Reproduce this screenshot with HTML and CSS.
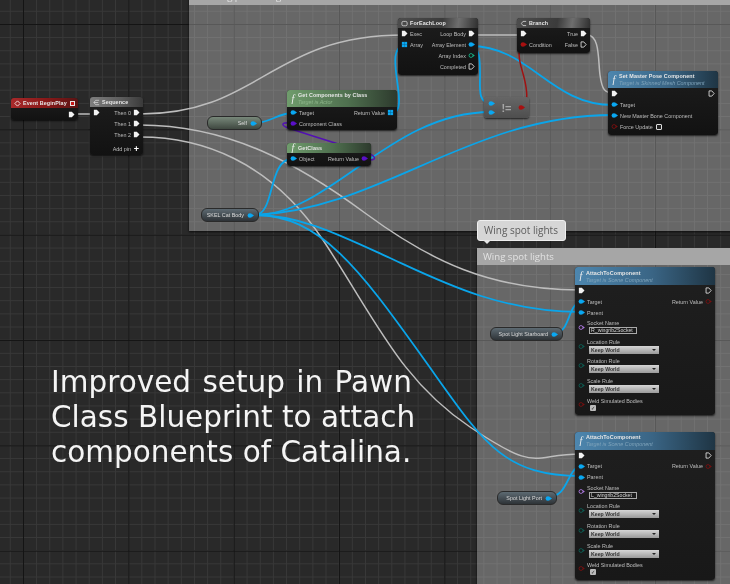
FILE: index.html
```html
<!doctype html>
<html lang="en">
<head>
    <meta charset="UTF-8">
    <meta name="viewport" content="width=device-width, initial-scale=1">
    <title>Pawn Class Blueprint</title>
    <link rel="stylesheet" href="styles.css">
</head>
<body>
<svg class="defs" width="0" height="0">
    <symbol id="exec" viewBox="0 0 8 8"><path d="M1 .8h3.4L7.4 4 4.4 7.2H1z" fill="currentColor"/></symbol>
    <symbol id="exec-off" viewBox="0 0 8 8"><path d="M1.2 1h3.1L7 4 4.3 7H1.2z" fill="none" stroke="currentColor" stroke-width=".9"/></symbol>
    <symbol id="data" viewBox="0 0 8 8"><circle cx="3.4" cy="4" r="2.7" fill="currentColor"/><path d="M5.6 2.2 8 4 5.6 5.8z" fill="currentColor"/></symbol>
    <symbol id="data-off" viewBox="0 0 8 8"><circle cx="3.4" cy="4" r="2.2" fill="none" stroke="currentColor" stroke-width="1"/><path d="M5.8 2.6 7.8 4 5.8 5.4z" fill="currentColor"/></symbol>
    <symbol id="array" viewBox="0 0 8 8"><path d="M1 1h6v6H1z" fill="currentColor"/><path d="M1 4h6M4 1v6" stroke="#0b5f88" stroke-width=".5"/></symbol>
</svg>

<div class="graph">
    <div class="comment comment-top"><div class="comment-title">Rotating planes together</div></div>
    <div class="comment comment-wing"><div class="comment-title">Wing spot lights</div></div>

    <svg class="wires" width="730" height="584" viewBox="0 0 730 584">
        <g class="wire-exec">
            <path d="M75 114H96"/>
            <path d="M140 114C260 114 270 35 404 35"/>
            <path d="M140 125C230 125 300 165 365 213S490 290 581 290"/>
            <path d="M140 137C200 137 270 160 323 240S400 380 470 427S530 454 581 454"/>
            <path d="M472 35H523"/>
            <path d="M587 35C600 35 598 60 600 75S605 93 613 93"/>
        </g>
        <g class="wire-data">
            <path d="M255 123C270 123 278 113 293 113"/>
            <path d="M255 215C275 215 268 159 292 159"/>
            <path d="M255 215C330 215 390 112 491 112"/>
            <path d="M255 215C380 210 470 115 613 115"/>
            <path d="M255 215C300 215 340 235 390 258S500 312 581 312"/>
            <path d="M255 215C320 215 360 270 421 355S500 476 581 476"/>
            <path d="M392 113C402 113 399 95 397 80S392 46 405 46"/>
            <path d="M470 46C480 46 480 60 480 75S478 103 491 103"/>
            <path d="M470 46C530 46 550 105 613 105"/>
            <path d="M554 333C572 333 566 302 583 302"/>
            <path d="M548 497C570 497 566 466 583 466"/>
        </g>
        <path class="wire-class" d="M362 159C378 162 378 157 366 152C340 145 310 135 288 128C280 125 281 122 293 123"/>
        <path class="wire-bool" d="M523 47C517 47 519 60 522 70S532 107 520 107"/>
    </svg>

    <div class="node node-event">
        <div class="node-head head-red">
            <svg class="head-icon" viewBox="0 0 8 8"><path d="M4 1 7 4 4 7 1 4z" fill="none" stroke="#fff" stroke-width=".9"/></svg>
            <span class="title">Event BeginPlay</span>
            <span class="delegate"></span>
        </div>
        <div class="row"><span></span><span class="pins"><svg class="pin white"><use href="#exec"/></svg></span></div>
    </div>

    <div class="node node-sequence">
        <div class="node-head head-grey">
            <svg class="head-icon" viewBox="0 0 8 8"><path d="M7 1.5H3L1 4l2 2.5h4M1 4h5" fill="none" stroke="#ddd" stroke-width=".8"/></svg>
            <span class="title">Sequence</span>
        </div>
        <div class="row">
            <span class="pins"><svg class="pin white"><use href="#exec"/></svg></span>
            <span class="pins">Then 0 <svg class="pin white"><use href="#exec"/></svg></span>
        </div>
        <div class="row"><span></span><span class="pins">Then 1 <svg class="pin white"><use href="#exec"/></svg></span></div>
        <div class="row"><span></span><span class="pins">Then 2 <svg class="pin white"><use href="#exec"/></svg></span></div>
        <div class="row row-add"><span></span><span class="pins">Add pin <b class="plus">+</b></span></div>
    </div>

    <div class="var var-self">Self <svg class="pin blue"><use href="#data"/></svg></div>
    <div class="var var-body">SKEL Cat Body <svg class="pin blue"><use href="#data"/></svg></div>

    <div class="node node-components">
        <div class="node-head head-green head-tall">
            <i class="fn">f</i>
            <div><div class="title">Get Components by Class</div><div class="subtitle subtitle-green">Target is Actor</div></div>
        </div>
        <div class="row">
            <span class="pins"><svg class="pin blue"><use href="#data"/></svg> Target</span>
            <span class="pins">Return Value <svg class="pin blue"><use href="#array"/></svg></span>
        </div>
        <div class="row"><span class="pins"><svg class="pin purple"><use href="#data"/></svg> Component Class</span></div>
    </div>

    <div class="node node-getclass">
        <div class="node-head head-green">
            <i class="fn">f</i>
            <span class="title">GetClass</span>
        </div>
        <div class="row">
            <span class="pins"><svg class="pin blue"><use href="#data"/></svg> Object</span>
            <span class="pins">Return Value <svg class="pin purple"><use href="#data"/></svg></span>
        </div>
    </div>

    <div class="node node-loop">
        <div class="node-head head-flow">
            <svg class="head-icon" viewBox="0 0 8 8"><rect x="1" y="1.6" width="6" height="5" rx="1.6" fill="none" stroke="#ddd" stroke-width=".9"/></svg>
            <span class="title">ForEachLoop</span>
        </div>
        <div class="row">
            <span class="pins"><svg class="pin white"><use href="#exec"/></svg> Exec</span>
            <span class="pins">Loop Body <svg class="pin white"><use href="#exec"/></svg></span>
        </div>
        <div class="row">
            <span class="pins"><svg class="pin blue"><use href="#array"/></svg> Array</span>
            <span class="pins">Array Element <svg class="pin blue"><use href="#data"/></svg></span>
        </div>
        <div class="row"><span></span><span class="pins">Array Index <svg class="pin teal"><use href="#data-off"/></svg></span></div>
        <div class="row"><span></span><span class="pins">Completed <svg class="pin white"><use href="#exec-off"/></svg></span></div>
    </div>

    <div class="node node-branch">
        <div class="node-head head-flow">
            <svg class="head-icon" viewBox="0 0 8 8"><path d="M7 1.6H3.4L1.6 4l1.8 2.4H7" fill="none" stroke="#ddd" stroke-width=".9"/></svg>
            <span class="title">Branch</span>
        </div>
        <div class="row">
            <span class="pins"><svg class="pin white"><use href="#exec"/></svg></span>
            <span class="pins">True <svg class="pin white"><use href="#exec"/></svg></span>
        </div>
        <div class="row">
            <span class="pins"><svg class="pin red"><use href="#data"/></svg> Condition</span>
            <span class="pins">False <svg class="pin white"><use href="#exec-off"/></svg></span>
        </div>
    </div>

    <div class="node-compare">
        <div class="compare-inputs">
            <svg class="pin blue"><use href="#data"/></svg>
            <svg class="pin blue"><use href="#data"/></svg>
        </div>
        <span class="compare-sign">!=</span>
        <svg class="pin red"><use href="#data"/></svg>
    </div>

    <div class="node node-master">
        <div class="node-head head-blue head-tall">
            <i class="fn">f</i>
            <div><div class="title">Set Master Pose Component</div><div class="subtitle">Target is Skinned Mesh Component</div></div>
        </div>
        <div class="row">
            <span class="pins"><svg class="pin white"><use href="#exec"/></svg></span>
            <span class="pins"><svg class="pin white"><use href="#exec-off"/></svg></span>
        </div>
        <div class="row"><span class="pins"><svg class="pin blue"><use href="#data"/></svg> Target</span></div>
        <div class="row"><span class="pins"><svg class="pin blue"><use href="#data"/></svg> New Master Bone Component</span></div>
        <div class="row"><span class="pins"><svg class="pin maroon"><use href="#data-off"/></svg> Force Update <span class="check check-off"></span></span></div>
    </div>

    <div class="var var-starboard">Spot Light Starboard <svg class="pin blue"><use href="#data"/></svg></div>
    <div class="var var-port">Spot Light Port <svg class="pin blue"><use href="#data"/></svg></div>

    <div class="node node-attach node-attach-r">
        <div class="node-head head-blue head-tall">
            <i class="fn">f</i>
            <div><div class="title">AttachToComponent</div><div class="subtitle">Target is Scene Component</div></div>
        </div>
        <div class="row">
            <span class="pins"><svg class="pin white"><use href="#exec"/></svg></span>
            <span class="pins"><svg class="pin white"><use href="#exec-off"/></svg></span>
        </div>
        <div class="row">
            <span class="pins"><svg class="pin blue"><use href="#data"/></svg> Target</span>
            <span class="pins">Return Value <svg class="pin maroon"><use href="#data-off"/></svg></span>
        </div>
        <div class="row"><span class="pins"><svg class="pin blue"><use href="#data"/></svg> Parent</span></div>
        <div class="param param-socket">
            <svg class="pin lilac"><use href="#data-off"/></svg>
            <div><div class="param-label">Socket Name</div><div class="text-field">R_wingrib2Socket</div></div>
        </div>
        <div class="param">
            <svg class="pin dark-teal"><use href="#data-off"/></svg>
            <div><div class="param-label">Location Rule</div><div class="dropdown">Keep World</div></div>
        </div>
        <div class="param">
            <svg class="pin dark-teal"><use href="#data-off"/></svg>
            <div><div class="param-label">Rotation Rule</div><div class="dropdown">Keep World</div></div>
        </div>
        <div class="param">
            <svg class="pin dark-teal"><use href="#data-off"/></svg>
            <div><div class="param-label">Scale Rule</div><div class="dropdown">Keep World</div></div>
        </div>
        <div class="param">
            <svg class="pin maroon"><use href="#data-off"/></svg>
            <div><div class="param-label">Weld Simulated Bodies</div><span class="check">&#10003;</span></div>
        </div>
    </div>

    <div class="node node-attach node-attach-l">
        <div class="node-head head-blue head-tall">
            <i class="fn">f</i>
            <div><div class="title">AttachToComponent</div><div class="subtitle">Target is Scene Component</div></div>
        </div>
        <div class="row">
            <span class="pins"><svg class="pin white"><use href="#exec"/></svg></span>
            <span class="pins"><svg class="pin white"><use href="#exec-off"/></svg></span>
        </div>
        <div class="row">
            <span class="pins"><svg class="pin blue"><use href="#data"/></svg> Target</span>
            <span class="pins">Return Value <svg class="pin maroon"><use href="#data-off"/></svg></span>
        </div>
        <div class="row"><span class="pins"><svg class="pin blue"><use href="#data"/></svg> Parent</span></div>
        <div class="param param-socket">
            <svg class="pin lilac"><use href="#data-off"/></svg>
            <div><div class="param-label">Socket Name</div><div class="text-field">L_wingrib2Socket</div></div>
        </div>
        <div class="param">
            <svg class="pin dark-teal"><use href="#data-off"/></svg>
            <div><div class="param-label">Location Rule</div><div class="dropdown">Keep World</div></div>
        </div>
        <div class="param">
            <svg class="pin dark-teal"><use href="#data-off"/></svg>
            <div><div class="param-label">Rotation Rule</div><div class="dropdown">Keep World</div></div>
        </div>
        <div class="param">
            <svg class="pin dark-teal"><use href="#data-off"/></svg>
            <div><div class="param-label">Scale Rule</div><div class="dropdown">Keep World</div></div>
        </div>
        <div class="param">
            <svg class="pin maroon"><use href="#data-off"/></svg>
            <div><div class="param-label">Weld Simulated Bodies</div><span class="check">&#10003;</span></div>
        </div>
    </div>

    <div class="tooltip">Wing spot lights</div>

    <p class="caption"><span class="caption-lead">Improved setup in Pawn</span><br>Class Blueprint to attach<br>components of Catalina.</p>
</div>
</body>
</html>
```
FILE: styles.css
```css
body {
    margin: 0;
    padding: 0;
    font-family: "Liberation Sans", Arial, sans-serif;
    overflow: hidden;
}

.defs {
    position: absolute;
}

/* blueprint grid: major lines every 105.33px, minor every 13.17px */
.graph {
    position: relative;
    width: 730px;
    height: 584px;
    overflow: hidden;
    background-color: #292929;
    background-image:
        linear-gradient(90deg, #141414 1px, transparent 1px),
        linear-gradient(#141414 1px, transparent 1px),
        linear-gradient(90deg, #383838 1px, transparent 1px),
        linear-gradient(#383838 1px, transparent 1px);
    background-size: 105.33px 105.33px, 105.33px 105.33px, 13.17px 13.17px, 13.17px 13.17px;
    background-position: 23px 24px, 23px 24px, 9.8px 10.8px, 9.8px 10.8px;
    filter: blur(0.35px);
}

.comment {
    position: absolute;
    background: rgba(255, 255, 255, 0.29);
    box-shadow: 0 1px 2px #0c0c0c;
}

.comment-top {
    left: 189px;
    top: -12px;
    width: 560px;
    height: 243px;
}

.comment-wing {
    left: 477px;
    top: 248px;
    width: 280px;
    height: 350px;
}

.comment-title {
    height: 17px;
    padding-left: 6px;
    line-height: 17px;
    font-family: "Open Sans", sans-serif;
    font-size: 9.6px;
    color: #e2e2e2;
    background: #a6a6a6;
}

.wires {
    position: absolute;
    left: 0;
    top: 0;
}

.wires path {
    fill: none;
}

.wire-exec {
    stroke: #bdbdbd;
    stroke-width: 1.5;
}

.wire-data {
    stroke: #0aa5ea;
    stroke-width: 1.8;
}

.wire-class {
    stroke: #5310b4;
    stroke-width: 1.4;
}

.wire-bool {
    stroke: #a01212;
    stroke-width: 1.5;
}

/* nodes */
.node {
    position: absolute;
    box-sizing: border-box;
    display: flex;
    flex-direction: column;
    background: linear-gradient(#1d1d1d, #121212);
    border-radius: 3px;
    box-shadow: 0 1px 2px rgba(0, 0, 0, 0.7);
    font-size: 5.4px;
    color: #bdbdbd;
}

.node-head {
    display: flex;
    align-items: center;
    gap: 2px;
    height: 10px;
    flex: none;
    padding: 0 3px;
    border-radius: 3px 3px 0 0;
    color: #e6e6e6;
}

.head-tall {
    height: 17px;
}

.head-red {
    background: linear-gradient(90deg, #a8292a, #861818 55%, #5a1414);
}

.head-grey {
    background: linear-gradient(90deg, #7d7d7d, #5c5c5c 60%, #3a3a3a);
}

.head-flow {
    background: linear-gradient(100deg, #4d4d4d, #3b3b3b 55%, #6e6e6e 75%, #2f2f2f);
}

.head-green {
    background: linear-gradient(90deg, #6f9c6c, #4f704f 55%, #2d3a2d);
}

.head-blue {
    background: linear-gradient(90deg, #4d86ae, #3a6585 55%, #1f3544);
}

.head-icon {
    width: 7px;
    height: 7px;
    flex: none;
}

.fn {
    font-family: "Liberation Serif", serif;
    font-size: 10px;
    line-height: 10px;
    color: #eee;
    width: 6px;
    text-align: center;
}

.title {
    font-weight: bold;
    font-size: 5.4px;
    letter-spacing: 0.1px;
    line-height: 7px;
    white-space: nowrap;
}

.subtitle {
    font-size: 5.4px;
    line-height: 6px;
    font-style: italic;
    color: #7fa3ba;
    white-space: nowrap;
}

.subtitle-green {
    color: #8fb78c;
}

.delegate {
    margin-left: auto;
    width: 3px;
    height: 3px;
    border: 0.7px solid #e4e4e4;
    background: #c81616;
}

.row {
    display: flex;
    justify-content: space-between;
    align-items: center;
    height: 11px;
    flex: none;
    padding: 0 3px;
}

.row-add {
    margin-top: 3.5px;
}

.pins {
    display: flex;
    align-items: center;
    gap: 2px;
    white-space: nowrap;
}

.pin {
    width: 7px;
    height: 7px;
    flex: none;
}

.white { color: #f2f2f2; }
.blue { color: #0aa8f2; }
.purple { color: #5a10c8; }
.teal { color: #14b88a; }
.red { color: #a81010; }
.maroon { color: #7a0f0f; }
.lilac { color: #b27be6; }
.dark-teal { color: #0c5f55; }

.plus {
    width: 7px;
    font-size: 9px;
    line-height: 7px;
    text-align: center;
    color: #fff;
}

.node-event {
    left: 11px;
    top: 98px;
    width: 67px;
    height: 22px;
}

.node-event .row {
    height: 12px;
}

.node-sequence {
    left: 90px;
    top: 97px;
    width: 53px;
    height: 58px;
}

.node-components {
    left: 287px;
    top: 90px;
    width: 110px;
    height: 40px;
}

.node-getclass {
    left: 287px;
    top: 143px;
    width: 84px;
    height: 23px;
}

.node-loop {
    left: 398px;
    top: 18px;
    width: 80px;
    height: 57px;
}

.node-branch {
    left: 517px;
    top: 18px;
    width: 73px;
    height: 35px;
}

.node-master {
    left: 608px;
    top: 71px;
    width: 110px;
    height: 64px;
}

.node-attach {
    width: 140px;
    height: 148px;
    background: linear-gradient(#1f1f1f, #181818);
}

.node-attach .head-tall {
    height: 18px;
}

.node-attach-r {
    left: 575px;
    top: 267px;
}

.node-attach-l {
    left: 575px;
    top: 431.6px;
}

.param {
    display: flex;
    align-items: center;
    gap: 2px;
    padding: 0 3px;
    margin-top: 4.7px;
}

.param-socket {
    margin-top: 2px;
}

.param-label {
    height: 7px;
    line-height: 7px;
}

.text-field {
    box-sizing: border-box;
    width: 48px;
    height: 7px;
    margin-left: 2px;
    padding-left: 1px;
    border: 0.6px solid #aaa;
    line-height: 5.6px;
    font-size: 5.2px;
    background: #1a1a1a;
    color: #d6d6d6;
}

.dropdown {
    position: relative;
    box-sizing: border-box;
    width: 70px;
    height: 8px;
    margin-left: 2px;
    padding-left: 2px;
    line-height: 8px;
    font-size: 5.2px;
    font-weight: bold;
    background: linear-gradient(#d6d6d6, #9a9a9a);
    color: #333;
}

.dropdown::after {
    content: "";
    position: absolute;
    right: 3px;
    top: 3px;
    border: 2px solid transparent;
    border-top-color: #222;
    border-bottom: 0;
}

.check {
    display: inline-block;
    box-sizing: border-box;
    width: 6px;
    height: 6px;
    margin-left: 3px;
    border-radius: 1px;
    line-height: 6px;
    font-size: 5px;
    text-align: center;
    background: #bbb;
    color: #222;
}

.check-off {
    background: #222;
    border: 1px solid #ddd;
    margin-left: 1px;
}

/* != compare node */
.node-compare {
    position: absolute;
    left: 484px;
    top: 97px;
    width: 45px;
    height: 21px;
    box-sizing: border-box;
    padding: 0 4px;
    display: flex;
    align-items: center;
    justify-content: space-between;
    border-radius: 3px;
    background: linear-gradient(#666, #4e4e4e);
    box-shadow: 0 1px 2px rgba(0, 0, 0, 0.7);
}

.compare-inputs {
    display: flex;
    flex-direction: column;
    gap: 2px;
}

.compare-sign {
    font-size: 11px;
    font-weight: bold;
    color: #a6a6a6;
}

/* variable getters */
.var {
    position: absolute;
    box-sizing: border-box;
    height: 14px;
    padding: 0 4px;
    display: flex;
    align-items: center;
    justify-content: flex-end;
    gap: 3px;
    border-radius: 6px;
    border: 1px solid #2a2a2a;
    font-size: 5.4px;
    color: #dadada;
    background: linear-gradient(#5d6a72, #2e3337);
    white-space: nowrap;
}

.var-self {
    left: 207px;
    top: 116px;
    width: 55px;
    background: linear-gradient(#78887a, #3f4840);
}

.var-body {
    left: 201px;
    top: 208px;
    width: 58px;
}

.var-starboard {
    left: 490px;
    top: 327px;
    width: 73px;
}

.var-port {
    left: 497px;
    top: 491px;
    width: 60px;
}

.tooltip {
    position: absolute;
    left: 477px;
    top: 220px;
    box-sizing: border-box;
    width: 89px;
    height: 21px;
    padding-left: 6px;
    border: 1px solid #efefef;
    border-radius: 3px;
    line-height: 19px;
    font-family: "Open Sans", sans-serif;
    font-size: 10px;
    color: #5c5c5c;
    background: #d6d6d6;
}

.tooltip::after {
    content: "";
    position: absolute;
    left: 5px;
    top: 19px;
    border: 4px solid transparent;
    border-top-color: #e6e6e6;
    border-bottom: 0;
}

.caption {
    position: absolute;
    left: 51px;
    top: 365px;
    margin: 0;
    font-family: "DejaVu Sans", sans-serif;
    font-size: 29.5px;
    line-height: 35px;
    color: #f4f4f4;
    white-space: nowrap;
}

.caption-lead {
    word-spacing: 2px;
}
```
